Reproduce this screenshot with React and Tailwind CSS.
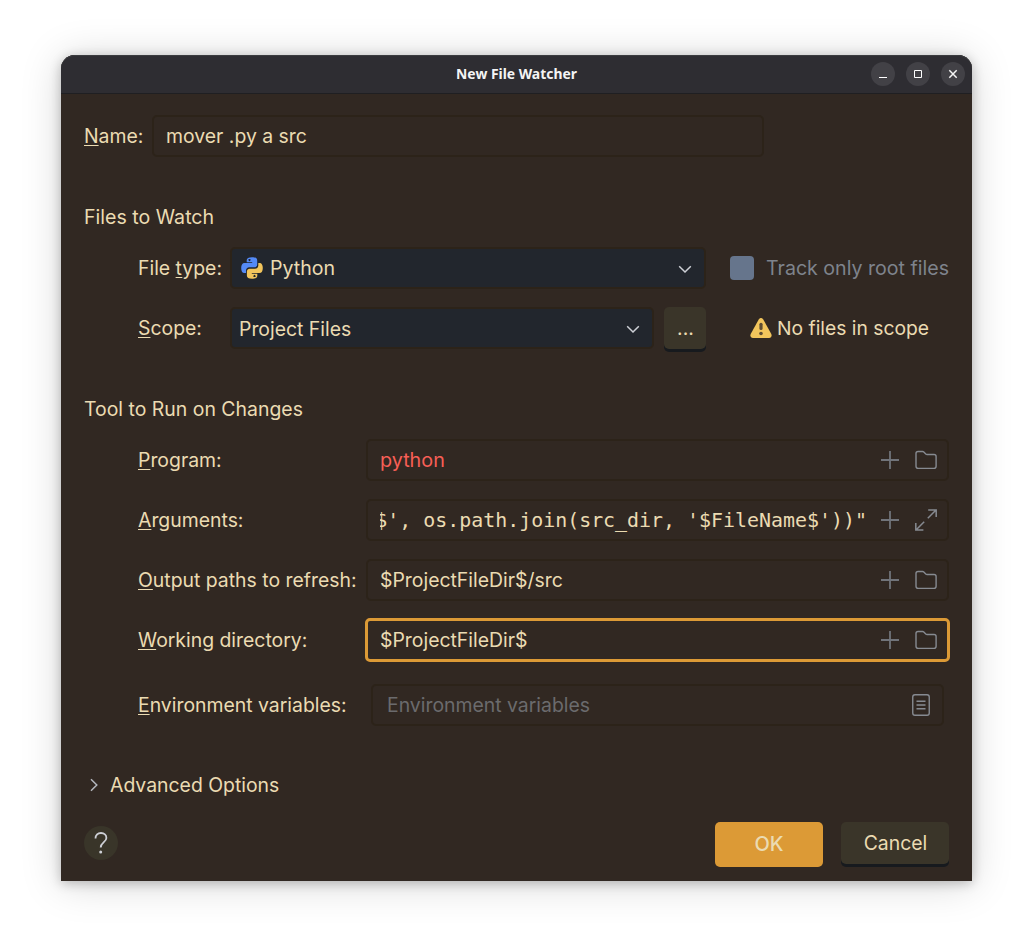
const mnemonic = "underline decoration-1 underline-offset-2 [text-decoration-skip-ink:none]";

function Label({ pre = "", hot, post, className = "" }) {
  return (
    <label className={"block shrink-0 whitespace-nowrap " + className}>
      {pre}
      <span className={mnemonic}>{hot}</span>
      {post}
    </label>
  );
}

function Plus() {
  return (
    <svg width="24" height="24" viewBox="0 0 24 24" className="shrink-0">
      <path d="M12 3v18M3 12h18" stroke="#71747a" strokeWidth="1.8" fill="none" />
    </svg>
  );
}

function Folder() {
  return (
    <svg width="24" height="24" viewBox="0 0 24 24" className="shrink-0">
      <path
        d="M2 5.6Q2 3.5 4.1 3.5H8.6Q9.3 3.5 9.8 4L12 6.2Q12.4 6.5 13 6.5H20Q22.1 6.5 22.1 8.6V18.3Q22.1 20.4 20 20.4H4.1Q2 20.4 2 18.3Z"
        fill="none"
        stroke="#868a91"
        strokeWidth="1.4"
      />
    </svg>
  );
}

function Expand() {
  return (
    <svg width="24" height="24" viewBox="0 0 24 24" className="shrink-0">
      <path
        d="M14.200 1.900H22.200V9M22 2L13.800 10.200M1.800 15V22.100H9.400M2 22L10.200 13.800"
        fill="none"
        stroke="#868a91"
        strokeWidth="1.5"
      />
    </svg>
  );
}

function ListDoc() {
  return (
    <svg width="24" height="24" viewBox="0 0 24 24" className="shrink-0">
      <rect x="3.75" y="1.75" width="16.5" height="20.5" rx="2.2" fill="none" stroke="#868a91" strokeWidth="1.4" />
      <path d="M7.5 8.2H16.5M7.5 12H16.5M7.5 15.8H16.5" stroke="#868a91" strokeWidth="1.4" />
    </svg>
  );
}

function Chevron() {
  return (
    <svg width="14" height="9" viewBox="0 0 14 9" className="mt-[3px] shrink-0">
      <path d="M1.2 1.2L7 7L12.8 1.2" fill="none" stroke="#ced0d6" strokeWidth="1.5" />
    </svg>
  );
}

function PythonLogo() {
  return (
    <svg width="22" height="22" viewBox="0 0 22 22" className="shrink-0">
      <path
        fill="#548af7"
        fillRule="evenodd"
        d="M11 .2C7.600 .2 5.700 1.200 5.700 3.200V5.300H11.200V6H3.500C1.300 6 .2 8 .2 11C.2 14 1.300 16 3.300 16H5V13.600C5 11.600 6.400 10.300 8.300 10.300H13.300C15 10.300 16.200 9 16.200 7.400V3.200C16.200 1.200 14.400 .2 11 .2ZM8.500 1.900A1 1 0 1 1 8.490 1.900Z"
      />
      <path
        fill="#f2c55c"
        fillRule="evenodd"
        d="M11 21.800C14.400 21.800 16.300 20.800 16.300 18.800V16.700H10.800V16H18.500C20.700 16 21.800 14 21.800 11C21.800 8 20.700 6 18.700 6H17.300V8.400C17.300 10.400 15.700 11.700 13.900 11.700H8.800C7.100 11.700 5.900 13 5.900 14.600V18.800C5.900 20.800 7.600 21.800 11 21.800ZM13.500 20.100A1 1 0 1 1 13.510 20.100Z"
      />
    </svg>
  );
}

function Warning() {
  return (
    <svg width="22" height="20" viewBox="0 0 22 20" className="shrink-0">
      <path
        d="M8.700 1.500Q11 -1.300 13.300 1.500L21.300 16Q22.500 19.600 19.300 20H2.700Q-.5 19.600 .7 16Z"
        fill="#f2c55c"
      />
      <path d="M11 6.300V10.500" stroke="#5e4d33" strokeWidth="3.200" strokeLinecap="round" />
      <circle cx="11" cy="15.500" r="1.800" fill="#5e4d33" />
    </svg>
  );
}

function ToolRow({ label, children, focused = false }) {
  return (
    <div className="mt-[18px] flex h-[42px] items-center pl-[54px]">
      <div className="w-[228px] shrink-0">{label}</div>
      <div
        className={
          focused
            ? "-mx-px flex h-11 w-[585px] shrink-0 items-center rounded-[5px] border-[3px] border-[#dc9a36] pr-[9px] pl-3"
            : "flex h-[42px] w-[583px] shrink-0 items-center rounded-[5px] border-2 border-[#2c2319] pr-[9px] pl-3"
        }
      >
        {children}
      </div>
    </div>
  );
}

function Title() {
  return (
    <header className="grid h-[39px] shrink-0 grid-cols-[1fr_auto_1fr] items-center rounded-t-[14px] border-b border-[#1f1f22] bg-[#2e2d32] shadow-[inset_0_1px_0_#3b3c3f]">
      <span />
      <h1 className="font-['Noto_Sans',sans-serif] text-[13.9px] leading-5 font-bold text-[#f4f4f4]">New File Watcher</h1>
      <div className="flex justify-end gap-[11px] pr-[7px]">
        <span className="flex size-6 items-center justify-center rounded-full bg-[#424146]">
          <svg width="10" height="10" viewBox="0 0 10 10"><path d="M1 8.500H9" stroke="#fff" /></svg>
        </span>
        <span className="flex size-6 items-center justify-center rounded-full bg-[#424146]">
          <svg width="10" height="10" viewBox="0 0 10 10"><path d="M1.500 1.500H8.500V8.500H1.500Z" fill="none" stroke="#fff" /></svg>
        </span>
        <span className="flex size-6 items-center justify-center rounded-full bg-[#424146]">
          <svg width="10" height="10" viewBox="0 0 10 10"><path d="M1.300 1.300L8.700 8.700M8.700 1.300L1.300 8.700" stroke="#f4f4f4" strokeWidth="1.500" /></svg>
        </span>
      </div>
    </header>
  );
}

export default function App() {
  return (
    <main className="h-[948px] w-[1033px] overflow-hidden bg-white pt-[55px] pl-[61px] font-['Inter',sans-serif] text-[19.4px] leading-6 text-[#ebdbb2]">
      <section className="flex h-[826px] w-[911px] flex-col rounded-t-[14px] bg-[#312822] shadow-[0_2px_12px_rgba(0,0,0,0.24),0_3px_40px_rgba(0,0,0,0.17)]">
        <Title />
        <div className="flex flex-1 flex-col pt-[21px] pr-[23px] pl-[23px]">
          <div className="flex h-[42px] items-center">
            <Label hot="N" post="ame:" className="w-[68px]" />
            <div className="flex h-[42px] w-[612px] items-center rounded-[5px] border-2 border-[#2c2319] pl-3">mover .py a src</div>
          </div>

          <h2 className="mt-12 text-[19.6px] leading-6">Files to Watch</h2>
          <div className="mt-[18px] flex h-[42px] items-center pl-[54px]">
            <Label pre="File " hot="t" post="ype:" className="w-[92px]" />
            <div className="flex h-[42px] w-[476px] shrink-0 items-center rounded-[5px] border-2 border-[#2c2319] bg-[#22262d] pr-3 pl-[9px]">
              <PythonLogo />
              <span className="ml-[7px] flex-1 text-[19.6px]">Python</span>
              <Chevron />
            </div>
            <span className="ml-6 size-6 shrink-0 rounded-[4px] bg-[#66758c]" />
            <span className="ml-3 text-[19.6px] whitespace-nowrap text-[#7e838c]">Track only root files</span>
          </div>
          <div className="mt-[18px] flex h-[42px] items-center pl-[54px]">
            <Label hot="S" post="cope:" className="w-[92px]" />
            <div className="flex h-[42px] w-[424px] shrink-0 items-center justify-between rounded-[5px] border-2 border-[#2c2319] bg-[#22262d] pr-3 pl-[7px]">
              <span className="pt-0.5">Project Files</span>
              <Chevron />
            </div>
            <button className="ml-[10px] h-[42px] w-[42px] shrink-0 rounded-[5px] bg-[#3a3529] pl-px shadow-[0_3px_0_#171a1e]">...</button>
            <span className="ml-11 flex items-center gap-[5px] whitespace-nowrap">
              <Warning />
              <span className="text-[19.3px]">No files in scope</span>
            </span>
          </div>

          <h2 className="mt-12 text-[19.45px] leading-6">Tool to Run on Changes</h2>
          <ToolRow label={<Label hot="P" post="rogram:" />}>
            <span className="flex-1 text-[19.8px] text-[#f75f56]">python</span>
            <Plus />
            <span className="w-3" />
            <Folder />
          </ToolRow>
          <ToolRow label={<Label hot="A" post="rguments:" />}>
            <div className="flex w-[487px] shrink-0 justify-end overflow-hidden pt-0.5 font-['DejaVu_Sans_Mono',monospace] text-[19.93px] whitespace-pre">
              {`$', os.path.join(src_dir, '$FileName$'))"`}
            </div>
            <span className="flex-1" />
            <Plus />
            <span className="w-3" />
            <Expand />
          </ToolRow>
          <ToolRow label={<Label hot="O" post="utput paths to refresh:" />}>
            <span className="flex-1">$ProjectFileDir$/src</span>
            <Plus />
            <span className="w-3" />
            <Folder />
          </ToolRow>
          <ToolRow focused label={<Label hot="W" post="orking directory:" />}>
            <span className="flex-1">$ProjectFileDir$</span>
            <Plus />
            <span className="w-3" />
            <Folder />
          </ToolRow>
          <div className="mt-[23px] flex h-[42px] items-center pl-[54px]">
            <Label hot="E" post="nvironment variables:" className="w-[233px]" />
            <div className="flex h-[42px] w-[573px] shrink-0 items-center justify-between rounded-[5px] border-2 border-[#2c2319] pr-[9px] pl-[14px]">
              <span className="text-[#6b6b6d]">Environment variables</span>
              <ListDoc />
            </div>
          </div>

          <div className="mt-[47px] flex h-6 items-center">
            <svg width="14" height="14" viewBox="0 0 14 14" className="ml-[3px]">
              <path d="M4 1.200L9.800 7L4 12.800" fill="none" stroke="#b4b8bf" strokeWidth="1.500" />
            </svg>
            <span className="ml-[9px]">Advanced Options</span>
          </div>

          <footer className="mt-[25px] flex h-[45px] items-start">
            <button className="mt-1 flex size-[34px] items-center justify-center rounded-full bg-[#393529]">
              <svg width="14" height="22" viewBox="0 0 14 22">
                <path d="M1.500 6.500C1.500 3 3.800 1 7 1C10.200 1 12.400 3 12.400 5.900C12.400 10 6.700 10.300 6.700 15.500" fill="none" stroke="#ced0d6" strokeWidth="1.800" />
                <circle cx="6.700" cy="20" r="1.500" fill="#ced0d6" />
              </svg>
            </button>
            <button className="ml-auto h-[45px] w-[108px] rounded-[5px] bg-[#dc9a36] pb-0.5 text-[20px] font-medium">OK</button>
            <button className="ml-[18px] h-[42px] w-[108px] rounded-[5px] bg-[#3a3529] pl-px shadow-[0_3px_0_#171a1e]">Cancel</button>
          </footer>
        </div>
      </section>
    </main>
  );
}
